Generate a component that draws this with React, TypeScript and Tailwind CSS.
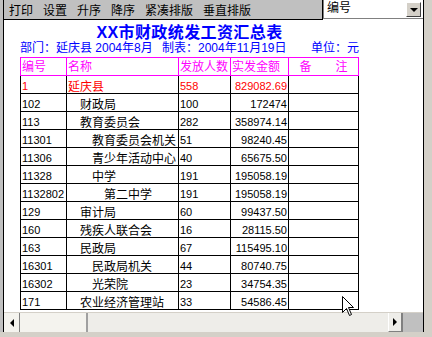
import React from "react";

type Row = { code: string; name: string; level: number; count: string; amount: string; red?: boolean };

const rows: Row[] = [
  { code: "1", name: "延庆县", level: 1, count: "558", amount: "829082.69", red: true },
  { code: "102", name: "财政局", level: 2, count: "100", amount: "172474" },
  { code: "113", name: "教育委员会", level: 2, count: "282", amount: "358974.14" },
  { code: "11301", name: "教育委员会机关", level: 3, count: "51", amount: "98240.45" },
  { code: "11306", name: "青少年活动中心", level: 3, count: "40", amount: "65675.50" },
  { code: "11328", name: "中学", level: 3, count: "191", amount: "195058.19" },
  { code: "1132802", name: "第二中学", level: 4, count: "191", amount: "195058.19" },
  { code: "129", name: "审计局", level: 2, count: "60", amount: "99437.50" },
  { code: "160", name: "残疾人联合会", level: 2, count: "16", amount: "28115.50" },
  { code: "163", name: "民政局", level: 2, count: "67", amount: "115495.10" },
  { code: "16301", name: "民政局机关", level: 3, count: "44", amount: "80740.75" },
  { code: "16302", name: "光荣院", level: 3, count: "23", amount: "34754.35" },
  { code: "171", name: "农业经济管理站", level: 2, count: "33", amount: "54586.45" },
];

const indent: Record<number, string> = { 1: "pl-[1px]", 2: "pl-[13px]", 3: "pl-[25px]", 4: "pl-[37px]" };

const tools = ["打印", "设置", "升序", "降序", "紧凑排版", "垂直排版"];

const font = { fontFamily: '"Liberation Sans", "Noto Sans CJK SC", sans-serif' };

const App = () => {
  return (
    <div className="relative h-[337px] w-[432px] overflow-hidden bg-[#d4d0c8]" style={font}>
      <div className="flex h-[332px]">
        <div className="w-[3px] bg-[#c0c0c0]" />
        <div className="flex w-[421px] flex-col border-x border-black">
          {/* top bar */}
          <div className="flex h-[20px] bg-white">
            <div className="flex h-[20px] w-[319px] gap-[10px] border-b border-r border-black bg-[#c0c0c0] pl-[5px] pt-[5px] text-[12px] leading-[12px] text-black">
              {tools.map((t) => (
                <span key={t}>{t}</span>
              ))}
            </div>
            <div className="flex h-[19px] flex-1 border-b border-l border-[#808080] bg-white pl-[3px]">
              <span className="flex-1 pt-[2px] text-[12px] leading-[12px] text-black">编号</span>
              <div className="mr-[2px] mt-[2px] flex h-[15px] w-[15px] items-center justify-center border border-b-[#404040] border-l-white border-r-[#404040] border-t-white bg-[#d4d0c8]">
                <div className="h-0 w-0 border-x-[4px] border-t-[4px] border-x-transparent border-t-black" />
              </div>
            </div>
          </div>

          {/* report */}
          <div className="h-[292px] overflow-hidden bg-white pl-[16px]">
            <div className="mt-[5px] w-[339px] text-center text-[16px] font-bold leading-[16px] tracking-[0.4px] text-[#0000ff]">
              XX市财政统发工资汇总表
            </div>
            <div className="mt-[1px] flex whitespace-nowrap text-[12px] leading-[12px] text-[#0000ff]">
              <span className="w-[142px]">部门：延庆县 2004年8月</span>
              <span className="w-[149px]">制表：2004年11月19日</span>
              <span>单位：元</span>
            </div>

            <div className="mt-[3px] w-[339px]">
              <div className="flex h-[19px] border-x border-y border-[#ff00ff] text-[12px] leading-[12px] text-[#ff00ff]">
                <div className="flex w-[46px] items-end border-r border-[#ff00ff] pb-[2px] pl-[1px]">编号</div>
                <div className="flex w-[112px] items-end border-r border-[#ff00ff] pb-[2px] pl-[1px]">名称</div>
                <div className="flex w-[52px] items-end border-r border-[#ff00ff] pb-[2px] pl-[1px]">发放人数</div>
                <div className="flex w-[58px] items-end border-r border-[#ff00ff] pb-[2px] pl-[1px]">实发金额</div>
                <div className="flex flex-1 items-end justify-center pb-[2px]">备　　注</div>
              </div>
              {rows.map((r) => (
                <div
                  key={r.code}
                  className={`flex h-[18px] border-x border-b border-black text-[12px] leading-[12px] ${r.red ? "text-[#ff0000]" : "text-black"}`}
                >
                  <div className="flex w-[46px] items-end border-r border-black pb-[1px] pl-[1px] text-[11px]">
                    {r.code}
                  </div>
                  <div className={`flex w-[112px] items-end border-r border-black ${indent[r.level]}`}>
                    {r.name}
                  </div>
                  <div className="flex w-[52px] items-end border-r border-black pb-[1px] pl-[1px] text-[11px]">
                    {r.count}
                  </div>
                  <div className="flex w-[58px] items-end justify-end border-r border-black pb-[1px] pr-[1px] text-[11px]">
                    {r.amount}
                  </div>
                  <div className="flex-1" />
                </div>
              ))}
            </div>
          </div>

          {/* horizontal scrollbar */}
          <div className="flex h-[20px] border-t border-[#d4d0c8] bg-[#eeede9]">
            <div className="flex w-[16px] items-center justify-center border-r border-[#808080] bg-[#f4f3ee]">
              <div className="h-0 w-0 border-y-[4px] border-r-[4px] border-y-transparent border-r-black" />
            </div>
            <div className="w-[68px] border-r-2 border-[#a0a0a0] bg-[#f4f3ee]" />
            <div className="flex-1" />
            <div className="flex w-[15px] items-center justify-center border-b border-l border-r-2 border-[#808080] border-l-white bg-[#eeede9]">
              <div className="h-0 w-0 border-y-[4px] border-l-[4px] border-y-transparent border-l-black" />
            </div>
            <div className="w-[20px] bg-[#c0c0c0]" />
          </div>
        </div>
        <div className="flex-1 bg-[#d4d0c8]" />
      </div>
      <div className="h-[5px] bg-[#d4d0c8]" />

      {/* mouse pointer */}
      <svg className="absolute left-[342px] top-[296px]" width="13" height="21" viewBox="0 0 13 21">
        <path d="M0.5 0.5 L0.5 16.5 L4.5 12.5 L7.5 19.5 L9.5 18.5 L6.5 11.5 L11.5 11.5 Z" fill="white" stroke="black" strokeWidth="1" />
      </svg>
    </div>
  );
};

export default App;
